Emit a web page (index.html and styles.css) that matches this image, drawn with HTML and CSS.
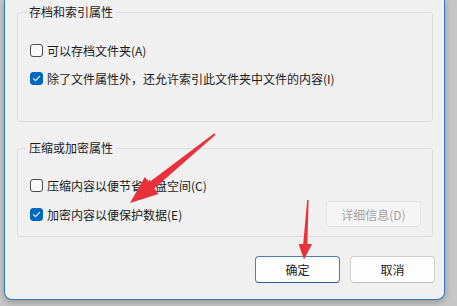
FILE: index.html
```html
<!DOCTYPE html>
<html lang="zh-CN">
<head>
<meta charset="utf-8">
<link rel="stylesheet" href="styles.css">
</head>
<body>
<div class="page">
  <div class="dialog">
    <fieldset class="group group-first">
      <legend>存档和索引属性</legend>
      <div class="rows">
        <label class="row"><span class="box"></span><span>可以存档文件夹(A)</span></label>
        <label class="row"><span class="box checked"><svg viewBox="0 0 13 13" width="13" height="13"><path d="M3.4 6.7 L5.5 8.7 L9.6 4.4" fill="none" stroke="#fff" stroke-width="1.1" stroke-linecap="round" stroke-linejoin="round"/></svg></span><span>除了文件属性外，还允许索引此文件夹中文件的内容(I)</span></label>
      </div>
    </fieldset>
    <fieldset class="group group-second">
      <legend>压缩或加密属性</legend>
      <div class="rows rows-second">
        <label class="row"><span class="box"></span><span>压缩内容以便节省磁盘空间(C)</span></label>
        <div class="row row-split">
          <label class="row"><span class="box checked"><svg viewBox="0 0 13 13" width="13" height="13"><path d="M3.4 6.7 L5.5 8.7 L9.6 4.4" fill="none" stroke="#fff" stroke-width="1.1" stroke-linecap="round" stroke-linejoin="round"/></svg></span><span>加密内容以便保护数据(E)</span></label>
          <button class="btn btn-disabled" disabled>详细信息(D)</button>
        </div>
      </div>
    </fieldset>
    <div class="actions">
      <button class="btn btn-primary">确定</button>
      <button class="btn">取消</button>
    </div>
  </div>
  <svg class="arrows" width="457" height="306" viewBox="0 0 457 306">
    <polygon fill="#e8313b" points="215.6,134.7 214.4,133.3 149.2,182.3 144.8,176.9 130,203 158.6,193.9 154.2,188.5"/>
    <polygon fill="#e8313b" points="307.2,200 308.6,200 307.4,244 312,244 304,259.5 298.6,244 303.2,244"/>
  </svg>
</div>
</body>
</html>
```

FILE: styles.css
```css
html, body {
  margin: 0;
  padding: 0;
}
body {
  width: 457px;
  height: 306px;
  overflow: hidden;
  background: #c6c6c6;
  font-family: "Noto Sans CJK SC", "Noto Sans", sans-serif;
  font-size: 12px;
  color: #1b1b1b;
}
.page {
  position: relative;
  width: 457px;
  height: 306px;
}
.dialog {
  margin-left: 4px;
  width: 439px;
  height: 299px;
  box-sizing: content-box;
  background: #f0f0f0;
  border: 1px solid #2a78c6;
  border-top: none;
  border-radius: 0 0 8px 8px;
  box-shadow: 0 2px 6px rgba(0,0,0,0.25);
  display: flex;
  flex-direction: column;
}
.group {
  margin: 0 11px 0 12px;
  border: 1px solid #dcdcdc;
  border-radius: 3px;
  padding: 0 11px 0 12px;
  min-width: 0;
}
.group legend {
  margin-left: -4px;
  padding: 0 3px;
  line-height: 16px;
  height: 16px;
}
.group-first {
  margin-top: 4px;
  padding-top: 20px;
  padding-bottom: 33px;
}
.group-second {
  margin-top: 18px;
  padding-top: 19px;
  padding-bottom: 9px;
}
.rows {
  display: flex;
  flex-direction: column;
  gap: 8px;
}
.rows-second {
  gap: 6px;
}
.row {
  display: flex;
  align-items: center;
  height: 20px;
  gap: 4px;
  white-space: nowrap;
}
.row-split {
  height: 26px;
  justify-content: space-between;
}
.box {
  width: 11px;
  height: 11px;
  border: 1px solid #4a4a4a;
  border-radius: 3px;
  background: #f8f8f8;
  display: inline-flex;
  flex: none;
  position: relative;
}
.box.checked {
  background: #0067c0;
  border-color: #0067c0;
}
.box svg {
  position: absolute;
  left: -1px;
  top: -1px;
}
.btn {
  font-family: inherit;
  font-size: 12px;
  color: #1b1b1b;
  width: 85px;
  height: 27px;
  padding: 0;
  background: #fdfdfd;
  border: 1px solid #d0d0d0;
  border-bottom-color: #bfbfbf;
  border-radius: 4px;
}
.btn-disabled {
  width: 95px;
  height: 26px;
  color: #a2a2a2;
  background: #f5f5f5;
  border: 1px solid #e2e2e2;
}
.btn-primary {
  border-color: #4f7eab;
  border-bottom-color: #2d5f91;
}
.actions {
  display: flex;
  justify-content: flex-end;
  gap: 10px;
  margin-top: 19px;
  margin-right: 9px;
}
.arrows {
  position: absolute;
  left: 0;
  top: 0;
  pointer-events: none;
}
```
